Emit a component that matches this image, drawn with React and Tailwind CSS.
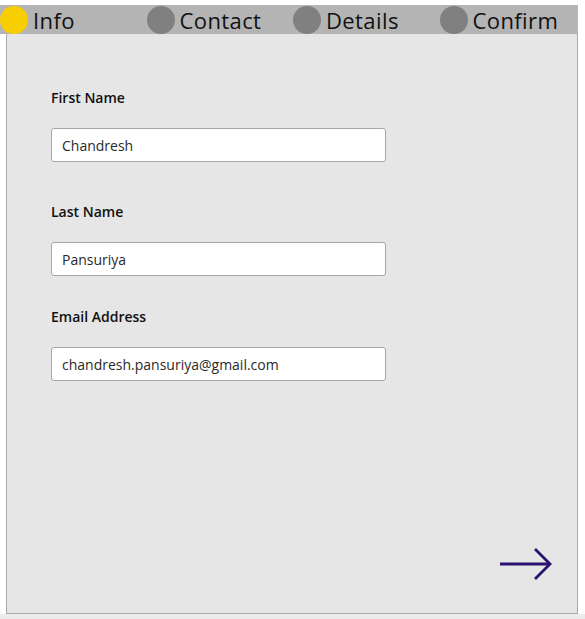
import React from 'react';

const steps = [
  { label: 'Info', active: true },
  { label: 'Contact' },
  { label: 'Details' },
  { label: 'Confirm' },
];

const fields = [
  { label: 'First Name', value: 'Chandresh', mt: 'mt-[54px]' },
  { label: 'Last Name', value: 'Pansuriya', mt: 'mt-[40px]' },
  { label: 'Email Address', value: 'chandresh.pansuriya@gmail.com', mt: 'mt-[31px]' },
];

function StepBar() {
  return (
    <div className="mt-[5px] flex h-[29px] w-[578px] bg-[#b4b4b4] overflow-hidden">
      {steps.map((s) => (
        <div key={s.label} className="flex w-[146.5px] shrink-0 items-center">
          <span
            className={`h-[28px] w-[28px] shrink-0 rounded-full ${s.active ? 'bg-[#f7cf00]' : 'bg-[#808080]'}`}
          />
          <span className="ml-[5px] text-[22px] font-medium tracking-[0.4px] leading-none text-[#111]">{s.label}</span>
        </div>
      ))}
    </div>
  );
}

export default function App() {
  return (
    <div className="h-[619px] w-[585px] overflow-hidden bg-white" style={{ fontFamily: '"Open Sans", sans-serif' }}>
      <StepBar />
      <div className="ml-[6px] flex h-[580px] w-[572px] flex-col border border-t-0 border-[#a8a8a8] bg-[#e6e6e6] pl-[44px]">
        {fields.map((f) => (
          <div key={f.label} className={f.mt}>
            <label className="block text-[14px] font-semibold leading-[20px] text-[#111]">{f.label}</label>
            <div className="mt-[20px] flex h-[34px] w-[335px] items-center rounded-[3px] border border-[#a6a6a6] bg-white px-[10px] text-[14px] text-[#2a2a2a]">
              {f.value}
            </div>
          </div>
        ))}
        <div className="mt-auto mb-[32px] flex justify-end pr-[24px]">
          <svg width="54" height="34" viewBox="0 0 54 34" fill="none" stroke="#2b1170" strokeWidth="2.8">
            <path d="M1 17 H51" />
            <path d="M36 2 L51 17 L36 32" />
          </svg>
        </div>
      </div>
      <div className="h-[5px] w-full bg-[#ececec]" />
    </div>
  );
}
